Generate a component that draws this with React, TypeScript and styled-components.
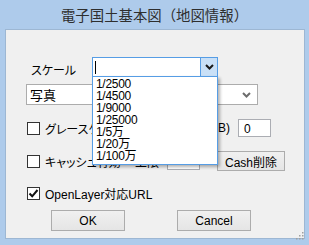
import styled, { createGlobalStyle } from 'styled-components';

const GlobalStyle = createGlobalStyle`
  html, body {
    margin: 0;
    padding: 0;
    background: #aecbeb;
  }
  body {
    font-family: "Liberation Sans", "Noto Sans CJK JP", sans-serif;
    font-size: 12px;
    color: #000;
    font-feature-settings: "palt";
  }
`;

const scales = ['1/2500', '1/4500', '1/9000', '1/25000', '1/5万', '1/20万', '1/100万'];

//Стрелка выпадающего списка
const Chevron = ({ color }: { color: string }) => (
  <svg width="9" height="6" viewBox="0 0 9 6">
    <path d="M1 1 L4.5 4.5 L8 1" fill="none" stroke={color} strokeWidth="2" />
  </svg>
);

function App() {
  return (
    <Frame>
      <GlobalStyle />
      <TitleBar>電子国土基本図（地図情報）</TitleBar>
      <Client>
        <ScaleRow>
          <ScaleLabel>スケール</ScaleLabel>
          <Combo>
            <ComboField><Caret /></ComboField>
            <ComboButton><Chevron color="#1a1a1a" /></ComboButton>
            <DropList>
              {scales.map(s => <DropItem key={s}>{s}</DropItem>)}
            </DropList>
          </Combo>
        </ScaleRow>
        <SelectBox>
          <span>写真</span>
          <Chevron color="#6d6d6d" />
        </SelectBox>
        <CheckRow $top={13}>
          <CheckBox />
          <CheckLabel>グレースケール</CheckLabel>
          <RightLabel>(RGB)</RightLabel>
          <NumInput $right={34}>0</NumInput>
        </CheckRow>
        <CheckRow $top={13}>
          <CheckBox />
          <CheckLabel>キャッシュ有効</CheckLabel>
          <RightLabel>上限</RightLabel>
          <NumInput $right={0}></NumInput>
          <SmallButton>Cash削除</SmallButton>
        </CheckRow>
        <CheckRow $top={12}>
          <CheckBox>
            <svg width="11" height="11" viewBox="0 0 11 11">
              <path d="M1.5 5.5 L4.2 8.3 L9.5 2" fill="none" stroke="#111" strokeWidth="2" />
            </svg>
          </CheckBox>
          <CheckLabel>OpenLayer対応URL</CheckLabel>
        </CheckRow>
        <ButtonRow>
          <DialogButton>OK</DialogButton>
          <DialogButton>Cancel</DialogButton>
        </ButtonRow>
        <Grip>
          <svg width="9" height="9" viewBox="0 0 9 9">
            {[[7, 1], [7, 4], [4, 4], [7, 7], [4, 7], [1, 7]].map(([x, y]) =>
              <rect key={`${x}-${y}`} x={x} y={y} width="1.5" height="1.5" fill="#a0a0a0" />)}
          </svg>
        </Grip>
      </Client>
    </Frame>
  );
}

export default App

//Окно целиком
const Frame = styled.div`
  width: 309px;
  height: 245px;
  display: flex;
  flex-direction: column;
  background: #aecbeb;
`;
//Заголовок окна
const TitleBar = styled.div`
  height: 29px;
  display: flex;
  align-items: center;
  justify-content: center;
  font-family: "Noto Sans CJK JP", sans-serif;
  font-feature-settings: normal;
  font-size: 14.4px;
  color: #2e2e2e;
  padding-bottom: 1px;
  box-sizing: border-box;
`;
//Клиентская область
const Client = styled.div`
  position: relative;
  flex: 1;
  margin: 0 4px 6px 5px;
  padding: 28px 0 0 21px;
  background: #f0f0f0;
  box-sizing: border-box;
  box-shadow: inset 0 0 0 1px #9db7d3;
`;
const ScaleRow = styled.div`
  display: flex;
  align-items: center;
  height: 20px;
`;
const ScaleLabel = styled.span`
  width: 66px;
  padding-left: 5px;
  padding-top: 5px;
  box-sizing: border-box;
`;
const Combo = styled.div`
  position: relative;
  display: flex;
  width: 126px;
  height: 20px;
  box-sizing: border-box;
  border: 1px solid #569de5;
  background: #fff;
`;
const ComboField = styled.div`
  flex: 1;
  display: flex;
  align-items: center;
  padding-left: 2px;
`;
const Caret = styled.div`
  width: 1px;
  height: 13px;
  background: #000;
`;
const ComboButton = styled.div`
  width: 16px;
  display: flex;
  align-items: center;
  justify-content: center;
  background: #c9e0f7;
  border-left: 1px solid #569de5;
`;
//Выпадающий список масштабов
const DropList = styled.div`
  position: absolute;
  top: 18px;
  left: -1px;
  width: 126px;
  box-sizing: border-box;
  padding: 1px 0 2px;
  background: #fff;
  border: 1px solid #569de5;
  box-shadow: 2px 2px 3px rgba(0, 0, 0, 0.3);
  z-index: 2;
`;
const DropItem = styled.div`
  height: 12px;
  line-height: 12px;
  padding-left: 3px;
  font-size: 12px;
  letter-spacing: -0.3px;
`;
const SelectBox = styled.div`
  margin-top: 7px;
  width: 232px;
  height: 21px;
  box-sizing: border-box;
  border: 1px solid #acacac;
  background: #fff;
  display: flex;
  align-items: center;
  justify-content: space-between;
  padding: 0 6px 0 3px;
  font-size: 13px;
`;
const CheckRow = styled.div<{ $top: number }>`
  display: flex;
  align-items: center;
  margin-top: ${p => p.$top}px;
  height: 20px;
`;
const CheckBox = styled.div`
  width: 13px;
  height: 13px;
  box-sizing: border-box;
  margin-left: 1px;
  border: 1px solid #333;
  background: #fff;
  display: flex;
  align-items: center;
  justify-content: center;
`;
const CheckLabel = styled.span`
  margin-left: 5px;
`;
const RightLabel = styled.span`
  margin-left: auto;
`;
const NumInput = styled.div<{ $right: number }>`
  margin-left: 8px;
  margin-right: ${p => p.$right}px;
  width: 33px;
  height: 18px;
  box-sizing: border-box;
  border: 1px solid #abadb3;
  background: #fff;
  padding: 2px 0 0 5px;
`;
const SmallButton = styled.div`
  margin-left: 17px;
  margin-right: 20px;
  width: 68px;
  height: 20px;
  box-sizing: border-box;
  border: 1px solid #acacac;
  background: linear-gradient(#f0f0f0, #e5e5e5);
  display: flex;
  align-items: center;
  justify-content: center;
`;
const ButtonRow = styled.div`
  display: flex;
  gap: 52px;
  margin-top: 7px;
  padding-left: 25px;
`;
const DialogButton = styled.div`
  width: 74px;
  height: 21px;
  box-sizing: border-box;
  border: 1px solid #acacac;
  background: linear-gradient(#f0f0f0, #e5e5e5);
  display: flex;
  align-items: center;
  justify-content: center;
`;
//Уголок для изменения размера
const Grip = styled.div`
  position: absolute;
  right: 1px;
  bottom: 1px;
  width: 9px;
  height: 9px;
`;
